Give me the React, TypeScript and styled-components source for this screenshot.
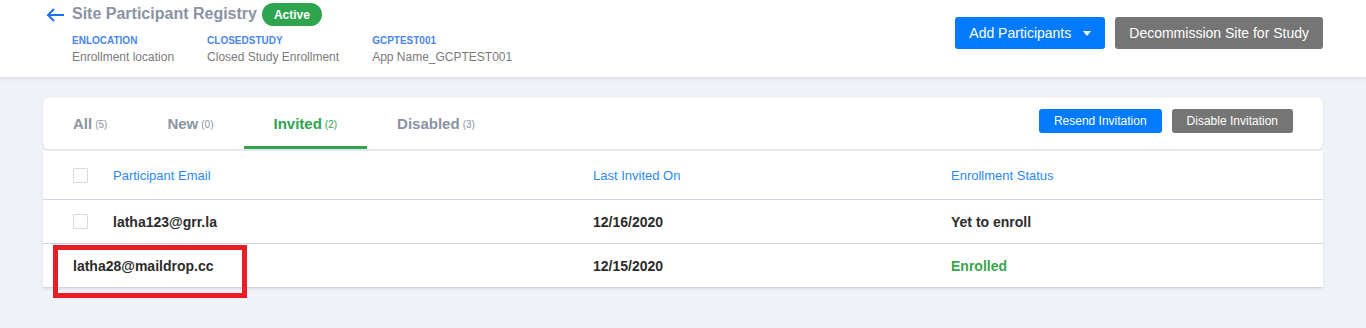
import styled, { createGlobalStyle } from "styled-components";

const GlobalStyle = createGlobalStyle`
  body {
    margin: 0;
    background: #eff2f6;
    font-family: "Liberation Sans", Arial, sans-serif;
  }
`;

const Header = styled.header`
  display: flex;
  justify-content: space-between;
  height: 77px;
  padding: 0 43px 0 46px;
  background: #fff;
  border-bottom: 1px solid #dde2e9;
  box-shadow: 0 2px 3px rgba(0, 0, 0, 0.05);
`;

const HeaderLeft = styled.div`
  display: flex;
  flex-direction: column;
`;

const TitleRow = styled.div`
  display: flex;
  align-items: center;
  height: 23px;
  margin-top: 3px;
`;

const BackButton = styled.button`
  display: flex;
  align-items: center;
  padding: 0;
  border: none;
  background: none;
  cursor: pointer;
  margin-right: 7px;
`;

const Title = styled.h1`
  margin: -1px 5px 0 0;
  font-size: 16px;
  font-weight: bold;
  color: #8a93a3;
`;

const StatusPill = styled.span`
  display: inline-flex;
  align-items: center;
  height: 23px;
  padding: 0 12px;
  border-radius: 12px;
  background: #2ea44f;
  color: #fff;
  font-size: 12px;
  font-weight: bold;
`;

const MetaRow = styled.div`
  display: flex;
  gap: 33px;
  margin: 9px 0 0 26px;
`;

const MetaItem = styled.div`
  display: flex;
  flex-direction: column;
  gap: 3px;
`;

const MetaLabel = styled.span`
  font-size: 10px;
  line-height: 12px;
  font-weight: bold;
  color: #4a86e8;
`;

const MetaValue = styled.span`
  font-size: 12px;
  line-height: 14px;
  color: #7a7a7a;
`;

const HeaderActions = styled.div`
  display: flex;
  gap: 10px;
  padding-top: 17px;
`;

const Button = styled.button<{ variant: "primary" | "secondary"; small?: boolean }>`
  display: inline-flex;
  align-items: center;
  height: ${({ small }) => (small ? "24px" : "32px")};
  padding: 0 ${({ small }) => (small ? "15px" : "14px")};
  border: none;
  border-radius: 3px;
  background: ${({ variant }) => (variant === "primary" ? "#007bff" : "#757575")};
  color: #fff;
  font-family: inherit;
  font-size: ${({ small }) => (small ? "12px" : "14px")};
  cursor: pointer;
`;

const Caret = styled.span`
  margin-left: 12px;
  border-top: 5px solid #fff;
  border-left: 4px solid transparent;
  border-right: 4px solid transparent;
`;

const Main = styled.main`
  padding: 20px 43px;
`;

const TabsCard = styled.div`
  display: flex;
  justify-content: space-between;
  height: 51px;
  background: #fff;
  border-radius: 6px;
  box-shadow: 0 1px 3px rgba(0, 0, 0, 0.08);
`;

const Tabs = styled.div`
  display: flex;
`;

const Tab = styled.div<{ active?: boolean }>`
  display: flex;
  align-items: center;
  gap: 3px;
  padding: 3px 30px 0;
  border-bottom: 3px solid ${({ active }) => (active ? "#2ea44f" : "transparent")};
  color: ${({ active }) => (active ? "#2ea44f" : "#8a93a3")};
  font-size: 15px;
  font-weight: bold;
  cursor: pointer;
`;

const TabCount = styled.span`
  font-size: 10px;
  font-weight: normal;
  padding-top: 2px;
`;

const TabActions = styled.div`
  display: flex;
  gap: 10px;
  padding: 11px 30px 0 0;
`;

const Table = styled.div`
  position: relative;
  margin-top: 2px;
  background: #fff;
  box-shadow: 0 1px 3px rgba(0, 0, 0, 0.08);
`;

const Row = styled.div<{ head?: boolean }>`
  display: grid;
  grid-template-columns: 520px 358px 1fr;
  align-items: center;
  height: ${({ head }) => (head ? "48px" : "43px")};
  padding-left: 30px;
  border-bottom: 1px solid #cfd5df;
`;

const Cell = styled.div`
  display: flex;
  align-items: center;
  gap: 25px;
`;

const HeadText = styled.span`
  font-size: 13px;
  color: #2a8af2;
`;

const BodyText = styled.span<{ tone?: "success" }>`
  font-size: 14px;
  font-weight: bold;
  color: ${({ tone }) => (tone === "success" ? "#38a54d" : "#2b2b2b")};
`;

const Checkbox = styled.span`
  display: inline-block;
  width: 15px;
  height: 15px;
  box-sizing: border-box;
  border: 1px solid #d6dade;
  border-radius: 1px;
`;

const Highlight = styled.div`
  position: absolute;
  left: 10px;
  top: 94px;
  width: 194px;
  height: 53px;
  box-sizing: border-box;
  border: 5px solid #e91d25;
  pointer-events: none;
`;

const meta = [
  { label: "ENLOCATION", value: "Enrollment location" },
  { label: "CLOSEDSTUDY", value: "Closed Study Enrollment" },
  { label: "GCPTEST001", value: "App Name_GCPTEST001" },
];

const tabs = [
  { name: "All", count: 5 },
  { name: "New", count: 0 },
  { name: "Invited", count: 2 },
  { name: "Disabled", count: 3 },
];

const participants = [
  { email: "latha123@grr.la", invited: "12/16/2020", status: "Yet to enroll", selectable: true },
  { email: "latha28@maildrop.cc", invited: "12/15/2020", status: "Enrolled", selectable: false },
];

export default function App() {
  return (
    <>
      <GlobalStyle />
      <Header>
        <HeaderLeft>
          <TitleRow>
            <BackButton aria-label="Back">
              <svg width="19" height="14" viewBox="0 0 19 14">
                <path
                  d="M18 7H2M8 1L2 7l6 6"
                  fill="none"
                  stroke="#1a73e8"
                  strokeWidth="2"
                />
              </svg>
            </BackButton>
            <Title>Site Participant Registry</Title>
            <StatusPill>Active</StatusPill>
          </TitleRow>
          <MetaRow>
            {meta.map((m) => (
              <MetaItem key={m.label}>
                <MetaLabel>{m.label}</MetaLabel>
                <MetaValue>{m.value}</MetaValue>
              </MetaItem>
            ))}
          </MetaRow>
        </HeaderLeft>
        <HeaderActions>
          <Button variant="primary">
            Add Participants
            <Caret />
          </Button>
          <Button variant="secondary">Decommission Site for Study</Button>
        </HeaderActions>
      </Header>
      <Main>
        <TabsCard>
          <Tabs>
            {tabs.map((t) => (
              <Tab key={t.name} active={t.name === "Invited"}>
                {t.name}
                <TabCount>({t.count})</TabCount>
              </Tab>
            ))}
          </Tabs>
          <TabActions>
            <Button variant="primary" small>
              Resend Invitation
            </Button>
            <Button variant="secondary" small>
              Disable Invitation
            </Button>
          </TabActions>
        </TabsCard>
        <Table>
          <Row head>
            <Cell>
              <Checkbox />
              <HeadText>Participant Email</HeadText>
            </Cell>
            <HeadText>Last Invited On</HeadText>
            <HeadText>Enrollment Status</HeadText>
          </Row>
          {participants.map((p) => (
            <Row key={p.email}>
              <Cell>
                {p.selectable && <Checkbox />}
                <BodyText>{p.email}</BodyText>
              </Cell>
              <BodyText>{p.invited}</BodyText>
              <BodyText tone={p.status === "Enrolled" ? "success" : undefined}>
                {p.status}
              </BodyText>
            </Row>
          ))}
          <Highlight />
        </Table>
      </Main>
    </>
  );
}
